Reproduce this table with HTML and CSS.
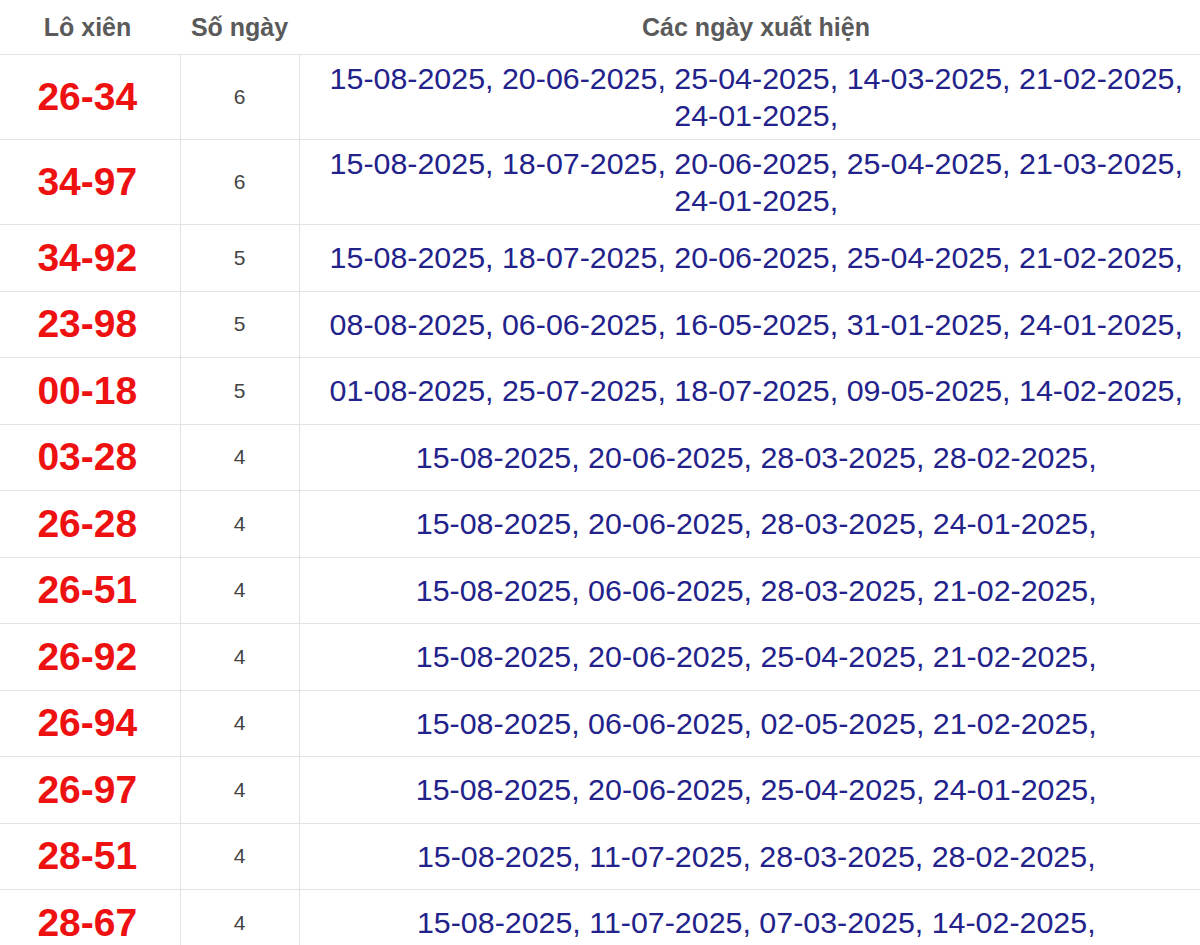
FILE: index.html
```html
<!DOCTYPE html>
<html lang="vi">
<head>
<meta charset="utf-8">
<title>Lô xiên</title>
<link rel="stylesheet" href="styles.css">
</head>
<body>
<table class="lx-table">
  <thead>
    <tr>
      <th class="c-pair">Lô xiên</th>
      <th class="c-count">Số ngày</th>
      <th class="c-dates">Các ngày xuất hiện</th>
    </tr>
  </thead>
  <tbody>
    <tr><td class="pair">26-34</td><td class="count">6</td><td class="dates">15-08-2025, 20-06-2025, 25-04-2025, 14-03-2025, 21-02-2025, 24-01-2025,</td></tr>
    <tr><td class="pair">34-97</td><td class="count">6</td><td class="dates">15-08-2025, 18-07-2025, 20-06-2025, 25-04-2025, 21-03-2025, 24-01-2025,</td></tr>
    <tr><td class="pair">34-92</td><td class="count">5</td><td class="dates">15-08-2025, 18-07-2025, 20-06-2025, 25-04-2025, 21-02-2025,</td></tr>
    <tr><td class="pair">23-98</td><td class="count">5</td><td class="dates">08-08-2025, 06-06-2025, 16-05-2025, 31-01-2025, 24-01-2025,</td></tr>
    <tr><td class="pair">00-18</td><td class="count">5</td><td class="dates">01-08-2025, 25-07-2025, 18-07-2025, 09-05-2025, 14-02-2025,</td></tr>
    <tr><td class="pair">03-28</td><td class="count">4</td><td class="dates">15-08-2025, 20-06-2025, 28-03-2025, 28-02-2025,</td></tr>
    <tr><td class="pair">26-28</td><td class="count">4</td><td class="dates">15-08-2025, 20-06-2025, 28-03-2025, 24-01-2025,</td></tr>
    <tr><td class="pair">26-51</td><td class="count">4</td><td class="dates">15-08-2025, 06-06-2025, 28-03-2025, 21-02-2025,</td></tr>
    <tr><td class="pair">26-92</td><td class="count">4</td><td class="dates">15-08-2025, 20-06-2025, 25-04-2025, 21-02-2025,</td></tr>
    <tr><td class="pair">26-94</td><td class="count">4</td><td class="dates">15-08-2025, 06-06-2025, 02-05-2025, 21-02-2025,</td></tr>
    <tr><td class="pair">26-97</td><td class="count">4</td><td class="dates">15-08-2025, 20-06-2025, 25-04-2025, 24-01-2025,</td></tr>
    <tr><td class="pair">28-51</td><td class="count">4</td><td class="dates">15-08-2025, 11-07-2025, 28-03-2025, 28-02-2025,</td></tr>
    <tr><td class="pair">28-67</td><td class="count">4</td><td class="dates">15-08-2025, 11-07-2025, 07-03-2025, 14-02-2025,</td></tr>
  </tbody>
</table>
</body>
</html>
```

FILE: styles.css
```css
html, body {
  margin: 0;
  padding: 0;
  background: #ffffff;
}

body {
  font-family: "Liberation Sans", Arial, sans-serif;
}

.lx-table {
  width: 1200px;
  border-collapse: collapse;
  table-layout: fixed;
}

.lx-table th {
  height: 54px;
  padding: 0;
  font-size: 25px;
  font-weight: bold;
  color: #5a5a5a;
  text-align: center;
  vertical-align: middle;
  border-bottom: 1px solid #e2e2e2;
}

.lx-table th.c-pair {
  width: 175px;
  padding-right: 5px;
}

.lx-table th.c-count {
  width: 119px;
}

.lx-table th.c-dates {
  padding-left: 13px;
}

.lx-table tbody tr {
  height: 66.5px;
}

.lx-table td {
  padding: 0;
  text-align: center;
  vertical-align: middle;
  border: 1px solid #e2e2e2;
}

.lx-table td:first-child { border-left: none; }
.lx-table td:last-child { border-right: none; }

.lx-table td.pair {
  padding-right: 5px;
  font-size: 39px;
  font-weight: bold;
  color: #ee1111;
}

.count {
  font-size: 21px;
  color: #444444;
}

.lx-table td.dates {
  font-size: 30.4px;
  line-height: 37px;
  padding: 5px 0 5px 13px;
  color: #22228a;
}
```
